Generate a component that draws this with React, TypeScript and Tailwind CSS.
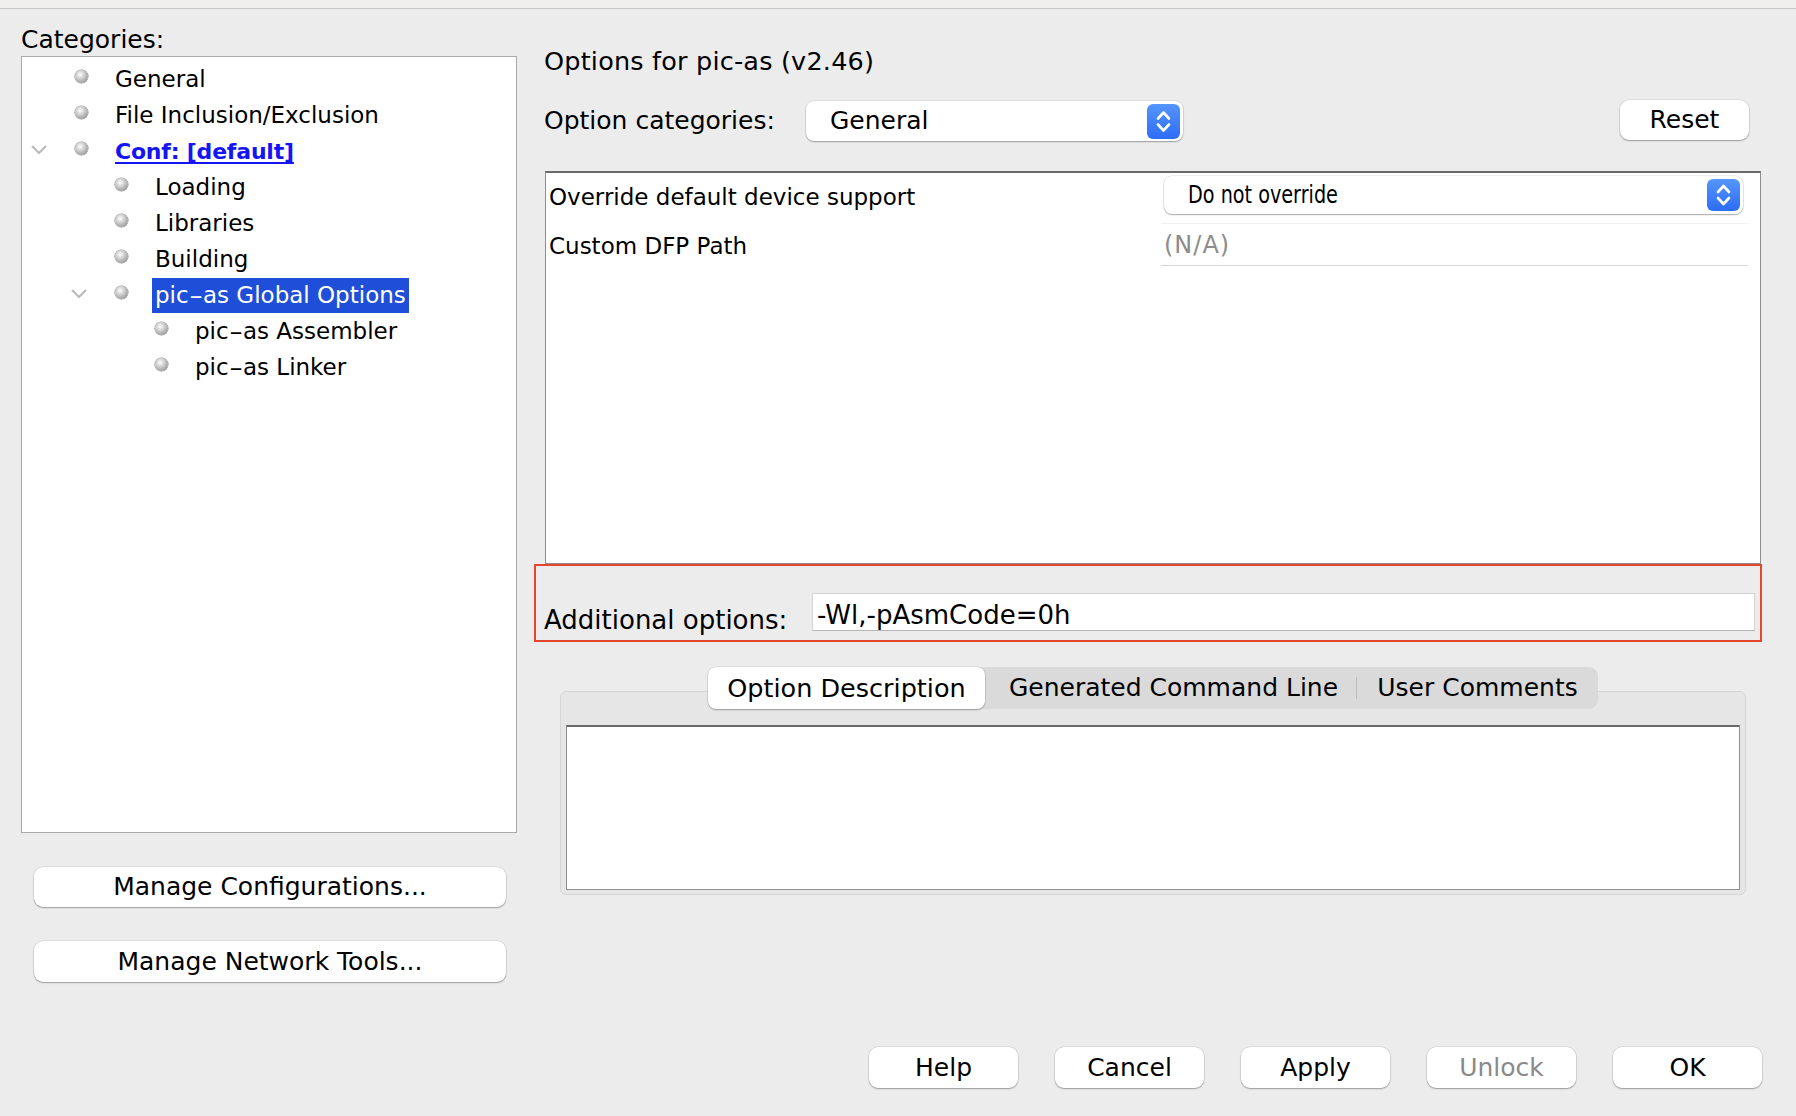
const TREE = [
  { label: "General", level: 0 },
  { label: "File Inclusion/Exclusion", level: 0 },
  { label: "Conf: [default]", level: 0, open: true, link: true },
  { label: "Loading", level: 1 },
  { label: "Libraries", level: 1 },
  { label: "Building", level: 1 },
  { label: "pic-as Global Options", level: 1, open: true, selected: true },
  { label: "pic-as Assembler", level: 2 },
  { label: "pic-as Linker", level: 2 },
];

const indent = ["pl-0", "pl-[40px]", "pl-[80px]"];

// the dash in "pic-as" is drawn wider in the original font
const Label = ({ text }: { text: string }) => {
  if (!text.startsWith("pic-as")) return <>{text}</>;
  return (
    <>
      pic<span className="inline-block mx-[3px] scale-x-[1.7]">-</span>
      {text.slice(4)}
    </>
  );
};

const Bullet = () => (
  <span className="inline-block w-[13px] h-[13px] rounded-full -mt-[6px] bg-[radial-gradient(circle_at_40%_35%,#ffffff_0%,#d0d0d0_35%,#7e7e7e_100%)] shadow-[0_0_0_0.5px_#8a8a8a]" />
);

const Chevron = () => (
  <svg width="18" height="12" viewBox="0 0 18 12" className="-mt-[4px]">
    <polyline points="2,3 9,10 16,3" fill="none" stroke="#b9b9b9" strokeWidth="2" />
  </svg>
);

const Stepper = ({ h }: { h: number }) => (
  <svg width="33" height={h} viewBox={`0 0 33 ${h}`}>
    <defs>
      <linearGradient id={`st${h}`} x1="0" y1="0" x2="0" y2="1">
        <stop offset="0" stopColor="#5595fd" />
        <stop offset="1" stopColor="#2d6cf5" />
      </linearGradient>
    </defs>
    <rect x="0" y="0" width="33" height={h} rx="6" fill={`url(#st${h})`} />
    <path d={`M11 ${h / 2 - 3} L16.5 ${h / 2 - 9} L22 ${h / 2 - 3}`} fill="none" stroke="#fff" strokeWidth="2.6" strokeLinecap="round" strokeLinejoin="round" />
    <path d={`M11 ${h / 2 + 3} L16.5 ${h / 2 + 9} L22 ${h / 2 + 3}`} fill="none" stroke="#fff" strokeWidth="2.6" strokeLinecap="round" strokeLinejoin="round" />
  </svg>
);

const btn =
  "bg-white rounded-[9px] shadow-[0_1px_1.5px_rgba(0,0,0,0.3),0_0_0_0.5px_rgba(0,0,0,0.12)] flex items-center justify-center text-[25px]";

const App = () => {
  return (
    <div className="w-[1796px] h-[1116px] bg-[#ececec] flex flex-col font-['DejaVu_Sans',sans-serif] text-black overflow-hidden">
      <div className="h-[9px] shrink-0 bg-[#f0efee] border-b border-[#c6c6c6]" />

      <div className="flex">
        {/* LEFT: categories */}
        <div className="ml-[21px] w-[496px] flex flex-col">
          <div className="mt-[17px] text-[25px] leading-[28px]">Categories:</div>
          <div className="mt-[2px] h-[777px] border border-[#aaaaaa] bg-white pt-[4px]">
            {TREE.map((t) => (
              <div key={t.label} className={`h-[36px] flex items-center text-[23px] ${indent[t.level]}`}>
                <span className="ml-[8px] w-[18px] flex justify-center">{t.open && <Chevron />}</span>
                <span className="ml-[27px] w-[13px] flex">
                  <Bullet />
                </span>
                {t.link ? (
                  <span className="ml-[27px] font-bold text-[22px] tracking-[-0.2px] text-[#1414f5] underline decoration-2 underline-offset-[3px]">
                    {t.label}
                  </span>
                ) : t.selected ? (
                  <span className="ml-[24px] px-[3px] h-[35px] flex items-center bg-[#1f4fd8] text-white">
                    <Label text={t.label} />
                  </span>
                ) : (
                  <span className="ml-[27px]">
                    <Label text={t.label} />
                  </span>
                )}
              </div>
            ))}
          </div>
          <button className={`mt-[34px] ml-[13px] w-[472px] h-[40px] ${btn}`}>Manage Configurations...</button>
          <button className={`mt-[34px] ml-[13px] w-[472px] h-[41px] ${btn}`}>Manage Network Tools...</button>
        </div>

        {/* RIGHT: options */}
        <div className="ml-[17px] w-[1228px] flex flex-col">
          <div className="mt-[38px] pl-[10px] text-[25.5px] leading-[28px] tracking-[0.2px]">Options for pic-as (v2.46)</div>

          <div className="mt-[26px] h-[40px] flex items-center pl-[10px]">
            <span className="w-[262px] text-[25px]">Option categories:</span>
            <div className="w-[377px] h-[40px] bg-white rounded-[8px] shadow-[0_1px_1.5px_rgba(0,0,0,0.3),0_0_0_0.5px_rgba(0,0,0,0.12)] flex items-center pl-[24px] pr-[3px]">
              <span className="flex-1 text-[25px]">General</span>
              <Stepper h={35} />
            </div>
            <div className="flex-1" />
            <button className={`w-[129px] h-[40px] mr-[13px] -mt-[2px] ${btn}`}>Reset</button>
          </div>

          <div className="mt-[30px] ml-[11px] mr-[1px] h-[393px] bg-white border-x border-b border-[#8e8e8e] border-t-2 border-t-[#6a6a6a]">
            <div className="mt-[3px] h-[38px] flex items-center text-[23px]">
              <span className="pl-[3px] w-[615px] leading-[38px] mt-[4px]">Override default device support</span>
              <div className="ml-[3px] w-[579px] h-[38px] bg-white rounded-[8px] shadow-[0_1px_1.5px_rgba(0,0,0,0.3),0_0_0_0.5px_rgba(0,0,0,0.12)] flex items-center pl-[24px] pr-[3px]">
                <span className="flex-1 text-[24px]">
                  <span className="inline-block scale-x-[0.8] origin-left">Do not override</span>
                </span>
                <Stepper h={32} />
              </div>
            </div>
            <div className="mt-[9px] h-[43px] flex items-center text-[23px]">
              <span className="pl-[3px] w-[615px] leading-[43px] mt-[3px]">Custom DFP Path</span>
              <div className="w-[587px] h-[43px] border-t border-[#f0f0f0] border-b border-b-[#d6d6d6] pl-[3px] flex items-center text-[24px] tracking-[1px] text-[#8c8c8c]">
                (N/A)
              </div>
            </div>
          </div>

          <div className="h-[78px] border-2 border-[#e5452d] flex items-end pl-[8px] pr-[5px] pb-[9px]">
            <span className="w-[268px] text-[26px] leading-[28px] -mb-[3px]">Additional options:</span>
            <div className="flex-1 h-[38px] bg-white border border-[#d4d4d4] border-b-[#b5b5b5] pl-[4px] text-[26px] leading-[42px]">
              -Wl,-pAsmCode=0h
            </div>
          </div>

          <div className="mt-[25px] ml-[26px] w-[1186px] flex flex-col">
            <div className="self-center relative z-10 w-[890px] h-[42px] flex items-center bg-[#dadada] rounded-[9px] text-[25px]">
              <div className="w-[277px] h-full bg-white rounded-[8px] shadow-[0_1px_1.5px_rgba(0,0,0,0.3),0_0_0_0.5px_rgba(0,0,0,0.1)] flex items-center justify-center text-[25.5px]">
                Option Description
              </div>
              <div className="w-[371px] flex justify-center pl-[6px]">Generated Command Line</div>
              <div className="w-px h-[22px] bg-[#bcbcbc]" />
              <div className="flex-1 flex justify-center">User Comments</div>
            </div>
            <div className="-mt-[18px] h-[204px] bg-[#e6e6e6] border border-[#d6d6d6] rounded-[6px] px-[5px] pt-[33px] pb-[4px]">
              <div className="h-full bg-white border border-[#909090] border-t-2 border-t-[#6a6a6a]" />
            </div>
          </div>
        </div>
      </div>

      <div className="flex-1" />

      <div className="flex justify-end gap-[37px] pr-[34px] pb-[28px]">
        <button className={`w-[149px] h-[41px] ${btn}`}>Help</button>
        <button className={`w-[149px] h-[41px] ${btn}`}>Cancel</button>
        <button className={`w-[149px] h-[41px] ${btn}`}>Apply</button>
        <button className={`w-[149px] h-[41px] ${btn} bg-[#f6f6f6] text-[#8a8a8a]`}>Unlock</button>
        <button className={`w-[149px] h-[41px] ${btn}`}>OK</button>
      </div>
    </div>
  );
};

export default App;
